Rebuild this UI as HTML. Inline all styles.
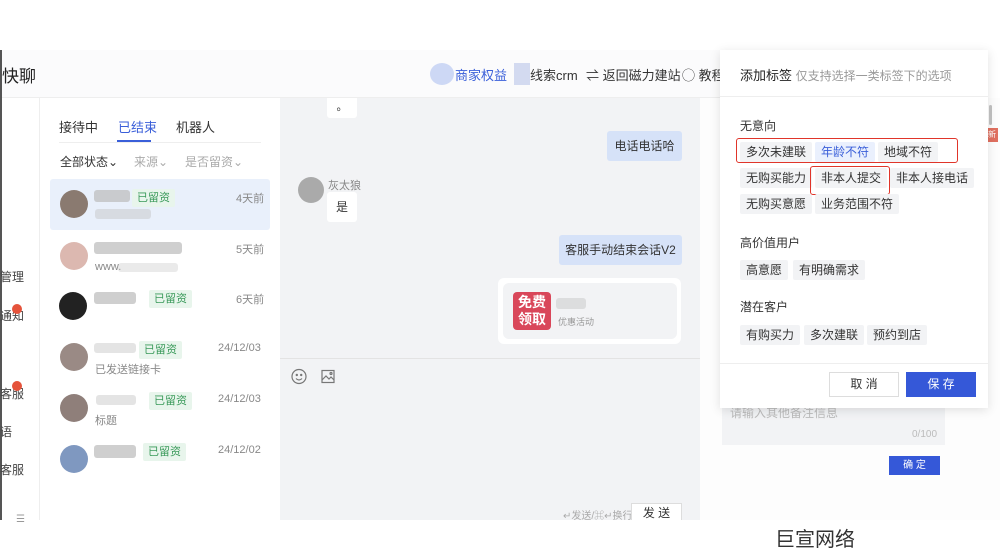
<!DOCTYPE html>
<html><head><meta charset="utf-8"><style>
*{margin:0;padding:0;box-sizing:border-box}
body{width:1000px;height:560px;overflow:hidden;background:#fff;position:relative;font-family:"Liberation Sans","Noto Sans CJK SC",sans-serif;font-size:12px;color:#333}
.a{position:absolute}
.tag{position:absolute;background:#f2f3f5;color:#333;font-size:12px;height:20px;line-height:20px;padding:0 6px;border-radius:2px}
.g{position:absolute;background:#e8f5ec;color:#3a9a5a;font-size:11px;height:18px;line-height:18px;padding:0 5px;border-radius:2px}
.blur{position:absolute;background:#bbb;border-radius:3px;opacity:.7}
.av{position:absolute;width:28px;height:28px;border-radius:50%}
.t{position:absolute;color:#888;font-size:11px}
</style></head><body>
<div class="a" style="left:0;top:0;width:1000px;height:50px;background:#fff"></div>
<div class="a" style="left:0;top:50px;width:2px;height:470px;background:#555"></div>
<!-- header -->
<div class="a" style="left:2px;top:50px;width:718px;height:48px;background:#fbfbfc;border-bottom:1px solid #eee"></div>
<div class="a" style="left:2px;top:62px;font-size:17px;color:#222">快聊</div>
<div class="a" style="left:430px;top:63px;width:24px;height:22px;border-radius:50%;background:#cdd8f5"></div>
<div class="a" style="left:455px;top:65px;font-size:13px;color:#3a5fd9">商家权益</div>
<div class="a" style="left:514px;top:63px;width:16px;height:22px;background:#d3daf0"></div>
<div class="a" style="left:530px;top:65px;font-size:13px;color:#333">线索crm</div>
<div class="a" style="left:586px;top:65px;font-size:13px;color:#333">⇌ 返回磁力建站</div>
<div class="a" style="left:682px;top:65px;font-size:13px;color:#333">◯ 教程</div>
<!-- left sidebar -->
<div class="a" style="left:2px;top:98px;width:38px;height:422px;background:#fff;border-right:1px solid #eee"></div>
<div class="a" style="left:0;top:268px;font-size:12px;color:#444">管理</div>
<div class="a" style="left:0;top:307px;font-size:12px;color:#444">通知</div>
<div class="a" style="left:12px;top:304px;width:10px;height:10px;border-radius:50%;background:#e5533b"></div>
<div class="a" style="left:0;top:385px;font-size:12px;color:#444">客服</div>
<div class="a" style="left:12px;top:381px;width:10px;height:10px;border-radius:50%;background:#e5533b"></div>
<div class="a" style="left:0;top:423px;font-size:12px;color:#444">语</div>
<div class="a" style="left:0;top:461px;font-size:12px;color:#444">客服</div>
<!-- list panel -->
<div class="a" style="left:40px;top:98px;width:240px;height:422px;background:#fff"></div>
<div class="a" style="left:59px;top:117px;font-size:13px;color:#333">接待中</div>
<div class="a" style="left:118px;top:117px;font-size:13px;color:#3a5fd9">已结束</div>
<div class="a" style="left:176px;top:117px;font-size:13px;color:#333">机器人</div>
<div class="a" style="left:59px;top:142px;width:202px;height:1px;background:#eee"></div>
<div class="a" style="left:117px;top:140px;width:34px;height:2px;background:#3a5fd9"></div>
<div class="a" style="left:60px;top:153px;font-size:12px;color:#333">全部状态⌄</div>
<div class="a" style="left:134px;top:153px;font-size:12px;color:#aaa">来源⌄</div>
<div class="a" style="left:185px;top:153px;font-size:12px;color:#aaa">是否留资⌄</div>
<div class="a" style="left:50px;top:179px;width:220px;height:51px;background:#e9f0fb;border-radius:3px"></div>
<div class="av" style="left:60px;top:190px;background:#8a7a70"></div><div class="blur" style="left:94px;top:190px;width:36px;height:12px"></div><div class="g" style="left:132px;top:189px">已留资</div><div class="t" style="left:236px;top:190px">4天前</div><div class="blur" style="left:95px;top:209px;width:56px;height:10px;opacity:.4"></div>
<div class="av" style="left:60px;top:242px;background:#dcb8b0"></div><div class="blur" style="left:94px;top:242px;width:88px;height:12px"></div><div class="t" style="left:236px;top:241px">5天前</div><div class="t" style="left:95px;top:261px">www.</div><div class="blur" style="left:118px;top:263px;width:60px;height:9px;opacity:.3"></div>
<div class="av" style="left:59px;top:292px;background:#222"></div><div class="blur" style="left:94px;top:292px;width:42px;height:12px"></div><div class="g" style="left:149px;top:290px">已留资</div><div class="t" style="left:236px;top:291px">6天前</div>
<div class="av" style="left:60px;top:343px;background:#9a8a85"></div><div class="blur" style="left:94px;top:343px;width:42px;height:10px;opacity:.4"></div><div class="g" style="left:139px;top:341px">已留资</div><div class="t" style="left:218px;top:342px">24/12/03</div><div class="t" style="left:95px;top:361px">已发送链接卡</div>
<div class="av" style="left:60px;top:394px;background:#8f7f7a"></div><div class="blur" style="left:96px;top:395px;width:40px;height:10px;opacity:.4"></div><div class="g" style="left:149px;top:392px">已留资</div><div class="t" style="left:218px;top:393px">24/12/03</div><div class="t" style="left:95px;top:412px">标题</div>
<div class="av" style="left:60px;top:445px;background:#7f98c0"></div><div class="blur" style="left:94px;top:445px;width:42px;height:13px"></div><div class="g" style="left:143px;top:443px">已留资</div><div class="t" style="left:218px;top:444px">24/12/02</div>
<!-- chat -->
<div class="a" style="left:280px;top:98px;width:420px;height:422px;background:#f2f3f5"></div>
<div class="a" style="left:327px;top:98px;width:30px;height:20px;background:#fff;border-radius:0 0 3px 3px;text-align:center;font-size:11px">。</div>
<div class="a" style="left:607px;top:131px;width:75px;height:30px;background:#d6e2f8;border-radius:3px;text-align:center;line-height:30px;font-size:12px">电话电话哈</div>
<div class="av" style="left:298px;top:177px;width:26px;height:26px;background:#aaa"></div>
<div class="a" style="left:328px;top:177px;font-size:11px;color:#888">灰太狼</div>
<div class="a" style="left:327px;top:192px;width:30px;height:30px;background:#fff;border-radius:3px;text-align:center;line-height:30px">是</div>
<div class="a" style="left:559px;top:235px;width:123px;height:30px;background:#d6e2f8;border-radius:3px;text-align:center;line-height:30px;font-size:12px">客服手动结束会话V2</div>
<div class="a" style="left:498px;top:278px;width:183px;height:66px;background:#fff;border-radius:6px"></div>
<div class="a" style="left:503px;top:283px;width:174px;height:56px;background:#f2f3f5;border-radius:6px"></div>
<div class="a" style="left:513px;top:292px;width:38px;height:38px;background:#d9475a;border-radius:4px;color:#fff;font-weight:bold;font-size:14px;line-height:17px;text-align:center;padding-top:2px">免费<br>领取</div>
<div class="blur" style="left:556px;top:298px;width:30px;height:11px;opacity:.4"></div>
<div class="a" style="left:558px;top:315px;font-size:9px;color:#999">优惠活动</div>
<div class="a" style="left:280px;top:358px;width:420px;height:1px;background:#e3e3e3"></div>
<svg class="a" style="left:291px;top:368px" width="46" height="17" viewBox="0 0 46 17" fill="none" stroke="#777" stroke-width="1.2">
<circle cx="8" cy="8.5" r="7"/><circle cx="5.8" cy="7" r=".6" fill="#777"/><circle cx="10.2" cy="7" r=".6" fill="#777"/><path d="M5 10.5q3 3 6 0"/>
<rect x="31" y="2.5" width="12" height="12"/><path d="M31 12l4-4 3 3 2-2 3 3"/><circle cx="40" cy="5.5" r="1"/>
</svg>
<div class="a" style="left:563px;top:507px;font-size:10px;color:#aaa">↵发送/⌘↵换行</div>
<div class="a" style="left:631px;top:503px;width:51px;height:18px;background:#fff;border:1px solid #ddd;border-bottom:none;text-align:center;font-size:12px;line-height:18px">发 送</div>
<!-- right panel -->
<div class="a" style="left:700px;top:98px;width:300px;height:422px;background:#fdfdfd"></div>
<div class="a" style="left:945px;top:98px;width:1px;height:112px;background:#e8e8e8"></div>
<div class="a" style="left:722px;top:380px;width:223px;height:65px;background:#f2f3f5"></div>
<div class="a" style="left:730px;top:404px;font-size:12px;color:#bbb">请输入其他备注信息</div>
<div class="a" style="left:912px;top:429px;font-size:10px;color:#bbb">0/100</div>
<div class="a" style="left:889px;top:456px;width:51px;height:19px;background:#3558d8;color:#fff;text-align:center;line-height:19px;font-size:10px">确 定</div>
<div class="a" style="left:988px;top:128px;width:10px;height:14px;background:#e07060;color:#fff;font-size:8px;line-height:14px">新</div>
<!-- modal -->
<div class="a" style="left:720px;top:50px;width:268px;height:358px;background:#fff;box-shadow:0 2px 10px rgba(0,0,0,.12)"></div>
<div class="a" style="left:720px;top:96px;width:268px;height:1px;background:#eee"></div>
<div class="a" style="left:989px;top:105px;width:3px;height:20px;background:#bbb;border-radius:2px"></div>
<div class="a" style="left:740px;top:65px;font-size:13px;color:#222">添加标签 <span style="font-size:12px;color:#999">仅支持选择一类标签下的选项</span></div>
<div class="a" style="left:740px;top:117px;font-size:12px;color:#333">无意向</div>
<div class="tag" style="left:740px;top:142px">多次未建联</div>
<div class="tag" style="left:815px;top:142px;background:#eaf0fd;color:#3a5fd9">年龄不符</div>
<div class="tag" style="left:878px;top:142px">地域不符</div>
<div class="a" style="left:736px;top:138px;width:222px;height:25px;border:1.5px solid #e0352a;border-radius:3px"></div>
<div class="tag" style="left:740px;top:168px">无购买能力</div>
<div class="tag" style="left:815px;top:168px">非本人提交</div>
<div class="tag" style="left:890px;top:168px">非本人接电话</div>
<div class="a" style="left:810px;top:166px;width:80px;height:29px;border:1.5px solid #e0352a;border-radius:3px"></div>
<div class="tag" style="left:740px;top:194px">无购买意愿</div>
<div class="tag" style="left:815px;top:194px">业务范围不符</div>
<div class="a" style="left:740px;top:234px;font-size:12px;color:#333">高价值用户</div>
<div class="tag" style="left:740px;top:260px">高意愿</div>
<div class="tag" style="left:793px;top:260px">有明确需求</div>
<div class="a" style="left:740px;top:298px;font-size:12px;color:#333">潜在客户</div>
<div class="tag" style="left:740px;top:325px">有购买力</div>
<div class="tag" style="left:804px;top:325px">多次建联</div>
<div class="tag" style="left:867px;top:325px">预约到店</div>
<div class="a" style="left:720px;top:363px;width:268px;height:1px;background:#eee"></div>
<div class="a" style="left:829px;top:372px;width:70px;height:25px;border:1px solid #ddd;background:#fff;text-align:center;line-height:23px;font-size:12px">取 消</div>
<div class="a" style="left:906px;top:372px;width:70px;height:25px;background:#3558d8;color:#fff;text-align:center;line-height:25px;font-size:12px">保 存</div>
<!-- bottom -->
<div class="a" style="left:0;top:520px;width:1000px;height:40px;background:#fff"></div>
<div class="a" style="left:16px;top:514px;font-size:10px;color:#999">☰</div>
<div class="a" style="left:775px;top:523px;font-size:20px;color:#333">巨宣网络</div>
</body></html>
